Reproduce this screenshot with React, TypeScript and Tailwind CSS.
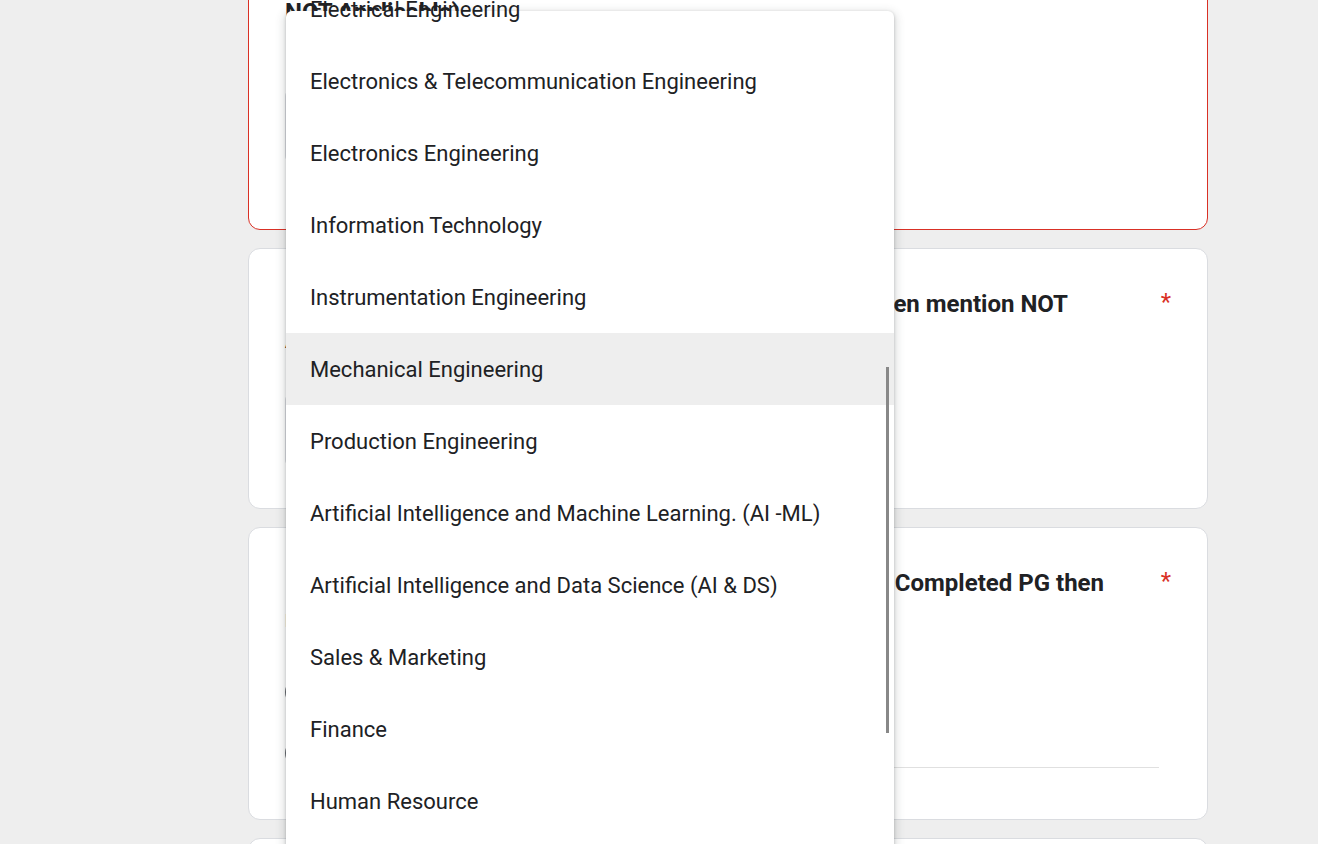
import React from "react";

const options = [
  "Electrical Engineering",
  "Electronics & Telecommunication Engineering",
  "Electronics Engineering",
  "Information Technology",
  "Instrumentation Engineering",
  "Mechanical Engineering",
  "Production Engineering",
  "Artificial Intelligence and Machine Learning. (AI -ML)",
  "Artificial Intelligence and Data Science (AI & DS)",
  "Sales & Marketing",
  "Finance",
  "Human Resource",
  "Operations",
];

const Asterisk = () => (
  <span className="text-[#d93025] text-[24px] leading-[36px] pl-4 -mt-px">*</span>
);

const Title = ({
  first,
  rest,
  lineClass,
}: {
  first: string;
  rest: string;
  lineClass: string;
}) => (
  <div className="flex justify-between">
    <div className="text-[24px] leading-[36px] font-bold text-[#202124] pt-px">
      <div className={lineClass}>{first}</div>
      <div>{rest}</div>
    </div>
    <Asterisk />
  </div>
);

const Dropdown = () => (
  <div className="absolute left-[286px] top-[11px] w-[608px] h-[900px] bg-white rounded-[6px] shadow-[0_3px_9px_3px_rgba(60,64,67,0.15),0_1px_3px_rgba(60,64,67,0.3)]">
    <div className="-mt-[38px] flex flex-col">
      {options.map((o) => (
        <div
          key={o}
          className={
            "h-[72px] flex items-center pl-[24px] text-[22px] text-[#202124] " +
            (o === "Mechanical Engineering" ? "bg-[#eeeeee]" : "")
          }
        >
          {o}
        </div>
      ))}
    </div>
    <div className="absolute left-[600px] top-[356px] w-[3px] h-[366px] bg-[#888888]" />
  </div>
);

export default function App() {
  return (
    <div
      className="relative h-[844px] overflow-hidden bg-[#eeeeee]"
      style={{ fontFamily: "Roboto, 'Noto Sans', sans-serif" }}
    >
      <div className="ml-[248px] w-[960px] -mt-[79px] flex flex-col">
        <div className="h-[309px] bg-white rounded-[12px] border border-[#d93025] px-[36px] pt-[36px]">
          <div className="text-[24px] leading-[36px] font-bold text-[#202124]">
            <div>Branch of Graduation (If not completed then mention</div>
            <div>NOT Applicable)</div>
          </div>
          <div className="mt-[60px] w-[300px] h-[72px] border border-[#dadce0] rounded-[6px]" />
        </div>

        <div className="mt-[18px] h-[261px] bg-white rounded-[12px] border border-[#dadce0] px-[36px] pt-[36px]">
          <Title
            first="Branch of Graduation (If pursuing Graduation then mention NOT"
            rest="Applicable)"
            lineClass="w-[783px] text-right whitespace-nowrap"
          />
          <div className="mt-[36px] w-[300px] h-[72px] border border-[#dadce0] rounded-[6px]" />
        </div>

        <div className="mt-[18px] h-[293px] bg-white rounded-[12px] border border-[#dadce0] px-[36px] pt-[36px]">
          <Title
            first="What is your Branch of Post Graduation (If Not Completed PG then"
            rest="mention NOT Applicable)"
            lineClass="w-[819px] text-right whitespace-nowrap"
          />
          <div className="mt-[39px] flex flex-col gap-[30px]">
            <div className="flex items-center gap-4">
              <div className="w-[30px] h-[30px] rounded-full border-[3px] border-[#5f6368]" />
              <span className="text-[21px] text-[#202124]">Not Applicable</span>
            </div>
            <div className="flex items-center gap-4">
              <div className="w-[30px] h-[30px] rounded-full border-[3px] border-[#5f6368]" />
              <span className="text-[21px] text-[#202124]">Other:</span>
              <div className="flex-1 mr-[12px] mt-[28px] border-b border-[#e0e0e0]" />
            </div>
          </div>
        </div>

        <div className="mt-[18px] h-[200px] bg-white rounded-[12px] border border-[#dadce0]" />
      </div>
      <Dropdown />
    </div>
  );
}
